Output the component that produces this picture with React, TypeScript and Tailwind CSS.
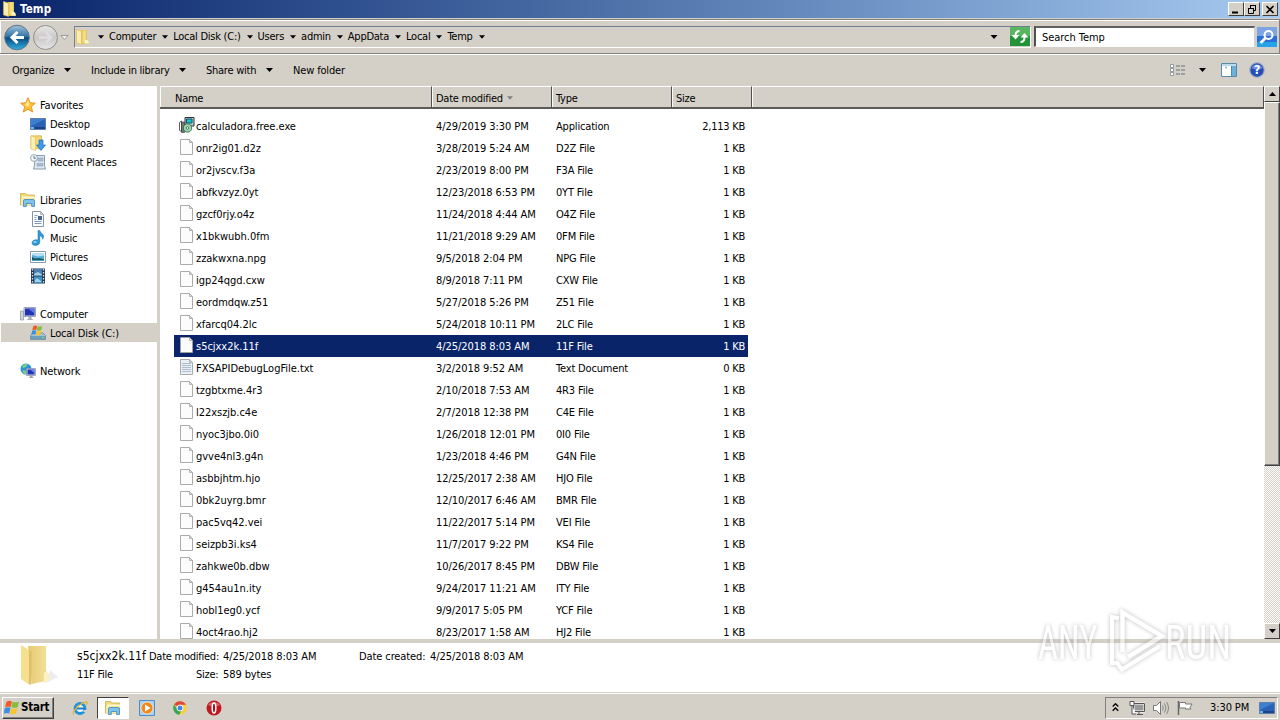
import type { ReactNode } from 'react'

type FileRow = [name: string, date: string, type: string, size: string]

const FILES: FileRow[] = [
  ['calculadora.free.exe', '4/29/2019 3:30 PM', 'Application', '2,113 KB'],
  ['onr2ig01.d2z', '3/28/2019 5:24 AM', 'D2Z File', '1 KB'],
  ['or2jvscv.f3a', '2/23/2019 8:00 PM', 'F3A File', '1 KB'],
  ['abfkvzyz.0yt', '12/23/2018 6:53 PM', '0YT File', '1 KB'],
  ['gzcf0rjy.o4z', '11/24/2018 4:44 AM', 'O4Z File', '1 KB'],
  ['x1bkwubh.0fm', '11/21/2018 9:29 AM', '0FM File', '1 KB'],
  ['zzakwxna.npg', '9/5/2018 2:04 PM', 'NPG File', '1 KB'],
  ['igp24qgd.cxw', '8/9/2018 7:11 PM', 'CXW File', '1 KB'],
  ['eordmdqw.z51', '5/27/2018 5:26 PM', 'Z51 File', '1 KB'],
  ['xfarcq04.2lc', '5/24/2018 10:11 PM', '2LC File', '1 KB'],
  ['s5cjxx2k.11f', '4/25/2018 8:03 AM', '11F File', '1 KB'],
  ['FXSAPIDebugLogFile.txt', '3/2/2018 9:52 AM', 'Text Document', '0 KB'],
  ['tzgbtxme.4r3', '2/10/2018 7:53 AM', '4R3 File', '1 KB'],
  ['l22xszjb.c4e', '2/7/2018 12:38 PM', 'C4E File', '1 KB'],
  ['nyoc3jbo.0i0', '1/26/2018 12:01 PM', '0I0 File', '1 KB'],
  ['gvve4nl3.g4n', '1/23/2018 4:46 PM', 'G4N File', '1 KB'],
  ['asbbjhtm.hjo', '12/25/2017 2:38 AM', 'HJO File', '1 KB'],
  ['0bk2uyrg.bmr', '12/10/2017 6:46 AM', 'BMR File', '1 KB'],
  ['pac5vq42.vei', '11/22/2017 5:14 PM', 'VEI File', '1 KB'],
  ['seizpb3i.ks4', '11/7/2017 9:22 PM', 'KS4 File', '1 KB'],
  ['zahkwe0b.dbw', '10/26/2017 8:45 PM', 'DBW File', '1 KB'],
  ['g454au1n.ity', '9/24/2017 11:21 AM', 'ITY File', '1 KB'],
  ['hobl1eg0.ycf', '9/9/2017 5:05 PM', 'YCF File', '1 KB'],
  ['4oct4rao.hj2', '8/23/2017 1:58 AM', 'HJ2 File', '1 KB'],
]

const SELECTED = 's5cjxx2k.11f'

const CRUMBS = ['Computer', 'Local Disk (C:)', 'Users', 'admin', 'AppData', 'Local', 'Temp']

function Svg({ children, size = 16 }: { children: ReactNode; size?: number }) {
  return (
    <svg width={size} height={size} viewBox="0 0 16 16" className="shrink-0">
      {children}
    </svg>
  )
}

function Caret({ className = '' }: { className?: string }) {
  return (
    <svg width="7" height="4" viewBox="0 0 7 4" className={`shrink-0 ${className}`}>
      <path d="M0 0h7L3.5 4z" fill="currentColor" />
    </svg>
  )
}

/* ---------- icons ---------- */

function FolderIcon() {
  return (
    <Svg>
      <path d="M6 1h6v10.500l2 3.500H6z" fill="#e3c358" />
      <path d="M7.500 1.500H11v12H7.500z" fill="#f2db84" />
      <path d="M1.500.500 6.500 2v13.500L1.500 14z" fill="#fbedae" stroke="#d8b64c" strokeWidth=".6" />
      <path d="M9.500 11.500c2-1.500 4-.5 4.500 3H9.500z" fill="#fff6c4" />
    </Svg>
  )
}

function StarIcon() {
  return (
    <Svg>
      <path d="m8 .700 2.100 5 5.200.500-3.900 3.500 1.200 5.300L8 12.300 3.400 15l1.200-5.300L.700 6.200l5.200-.500z" fill="#fdc23c" stroke="#e98a1c" strokeWidth=".9" />
      <path d="M8 3 9.300 6.600 8 10 5 8z" fill="#ffe89a" />
    </Svg>
  )
}

function DesktopIcon() {
  return (
    <Svg>
      <path d="M.500 2.500h15v11H.500z" fill="#2a62b8" stroke="#5c7fae" />
      <path d="M1 3h14L1 10z" fill="#3f7fd0" />
      <path d="M1 11h14v2H1z" fill="#1c4484" />
      <path d="M1 11h3v2H1z" fill="#6fb6e8" />
    </Svg>
  )
}

function DownloadsIcon() {
  return (
    <Svg>
      <path d="M1 .800h10.500v13H1z" fill="#f1d675" stroke="#cfac47" strokeWidth=".7" />
      <path d="M1 1 5.500 2v13.500L1 14z" fill="#fcefb4" stroke="#d8b64c" strokeWidth=".5" />
      <path d="M9 5h4v5h2.500L11 15.500 6.500 10H9z" fill="#3f9bea" stroke="#1d6bb8" strokeWidth=".7" />
    </Svg>
  )
}

function RecentIcon() {
  return (
    <Svg>
      <path d="M5 1.500h9.500v10l1 3.500H3.500l1-4z" fill="#dde6ee" stroke="#7f94a8" strokeWidth=".9" />
      <path d="M8 4h5v3H8zM7 9.500h6V12H7z" fill="#a9bfd3" stroke="#8197ad" strokeWidth=".5" />
      <circle cx="4" cy="4" r="3.400" fill="#f4f8fb" stroke="#8294a5" strokeWidth=".8" />
      <path d="M4 2v2.300h2" fill="none" stroke="#44586c" strokeWidth=".8" />
    </Svg>
  )
}

function LibrariesIcon() {
  return (
    <Svg>
      <path d="M.500 3V1.500h5L7 3h7.500v10h-14z" fill="#f2d979" stroke="#cfac47" strokeWidth=".8" />
      <path d="M2 4.500h13v3H2z" fill="#fff7d0" />
      <path d="M1 6h14v7H1z" fill="#f9e9a3" />
      <path d="M3.500 14.500V9q0-1.500 1.500-1.500h8q1.500 0 1.500 1.500v5.500h-2.800v-3H6.300v3z" fill="#7cc4ec" stroke="#3c87bd" strokeWidth=".8" />
    </Svg>
  )
}

function DocumentIcon() {
  return (
    <Svg>
      <path d="M2.500.500h8l3 3v12h-11z" fill="#fbfdff" stroke="#8593a3" />
      <path d="M4.500 4.500h3m-3 2h2m-2 2h2m-2 2h7m-7 2h7" stroke="#7590b2" strokeWidth=".9" />
      <path d="M8 5h4v4H8z" fill="#41668f" />
      <path d="M10.500.500v3h3z" fill="#d4dde7" stroke="#8593a3" strokeWidth=".6" />
    </Svg>
  )
}

function MusicIcon() {
  return (
    <Svg>
      <path d="M8 .500h1.800c.3 2.500 4 3.200 3.800 6.300-.1 1.200-.7 2-1.100 2.500.3-2-1-3.200-2.700-3.500V12c0 2-1.800 3.500-4.300 3.500S2 14.300 2 12.700 3.800 9.800 6 9.800c.8 0 1.500.1 2 .3z" fill="#2e9adb" stroke="#1a6dab" strokeWidth=".5" />
      <ellipse cx="5" cy="12" rx="1.800" ry="1" fill="#91d0f3" />
    </Svg>
  )
}

function PicturesIcon() {
  return (
    <Svg>
      <path d="M.500 2.500h15v11H.500z" fill="#fff" stroke="#8d99a6" />
      <path d="M2 4h12v8H2z" fill="#59aede" />
      <path d="M2 4h12v2.500L8 7.500 2 6z" fill="#b5e1f6" />
      <path d="m2 8 3 1.500L9 9l5 1v2H2z" fill="#175b63" />
      <path d="M2 11h12v1H2z" fill="#48a5bd" />
    </Svg>
  )
}

function VideosIcon() {
  return (
    <Svg>
      <path d="M1 .500h14v15H1z" fill="#27374f" />
      <path d="M4 1h8v6.500H4z" fill="#4a7fb5" />
      <path d="M4 8.500h8V15H4z" fill="#3d93c6" />
      <path d="m4 6 4-2 4 2.500v1H4zM5 12l2-2 4 3v1H5z" fill="#a3d0e4" />
      <path d="M2.500 1v14M13.500 1v14" stroke="#dde7f2" strokeWidth="1.300" strokeDasharray="1.500 1.500" />
    </Svg>
  )
}

function ComputerIcon() {
  return (
    <Svg>
      <path d="M.500 5h3v9h-3z" fill="#cfd4da" stroke="#8d949c" strokeWidth=".7" />
      <path d="M4 1.500h11.500v9H4z" fill="#d5d9e2" stroke="#8c93a5" strokeWidth=".8" />
      <path d="M5 2.500h9.500v7H5z" fill="#2033b5" />
      <path d="M8 2.500h6.500v5z" fill="#6078e6" />
      <path d="M8.500 11h3v1.500l2 1.500h-7l2-1.500z" fill="#a7aeb8" />
    </Svg>
  )
}

function Flag() {
  return (
    <>
      <path d="M2.500 1.800C4.500.500 6 .700 8 1.500L6.700 7C4.900 6.200 3 6.300 1 7.300z" fill="#ee5b26" />
      <path d="M8.700 1.800c2 .8 4.300.8 6.300-.3l-1.300 5.500c-2 1.100-4.300 1.100-6.300.3z" fill="#84bd3b" />
      <path d="M.800 8.200c2-1 3.900-1.100 5.700-.3l-1.300 5.600c-2-.8-3.700-.7-5.700.3z" fill="#3a8fe0" />
      <path d="M7.200 8.200c2 .8 4.300.8 6.300-.3l-1.300 5.500c-2 1.100-4.300 1.100-6.300.3z" fill="#fbc32b" />
    </>
  )
}

function DiskIcon() {
  return (
    <Svg>
      <path d="M.500 10.500 3 8h10l2.500 2.500v4H.500z" fill="#a9c2d2" stroke="#6b8a9e" strokeWidth=".8" />
      <path d="M1 11h14v3H1z" fill="#6b9fbb" />
      <path d="M12 12h2v1h-2z" fill="#7cea6e" />
      <g transform="translate(1.500 0) scale(.72)">
        <Flag />
      </g>
    </Svg>
  )
}

function NetworkIcon() {
  return (
    <Svg>
      <circle cx="6" cy="6" r="5.500" fill="#2c93d6" />
      <path d="M2 3c2-2 5-2.500 6-2L6 4 3 5zM3 7l4 1-1 3.300C3 11 2 9 3 7z" fill="#74d17d" />
      <path d="M6.500 5.500h9v7h-9z" fill="#d5d9e2" stroke="#878ea0" strokeWidth=".7" />
      <path d="M7.500 6.500h7v5h-7z" fill="#1f35bf" />
      <path d="M10 6.500h4.500v3.500z" fill="#6d84e8" />
      <path d="M10 13h2.500v1l1.500 1H8.500l1.500-1z" fill="#9aa2ad" />
    </Svg>
  )
}

function PageIcon({ lined = false }: { lined?: boolean }) {
  return (
    <Svg>
      <path d="M1.500.500h9l3 3v12h-12z" fill={lined ? '#e9eff4' : '#fcfcfc'} stroke="#a2a2a2" strokeWidth=".9" />
      <path d="M10.500.500v3h3z" fill="#e2e2e2" stroke="#a2a2a2" strokeWidth=".7" />
      {lined && <path d="M3 4.500h9m-9 2h9m-9 2h9m-9 2h9m-9 2h9" stroke="#9db2c2" strokeWidth=".8" />}
    </Svg>
  )
}

function InstallerIcon() {
  return (
    <Svg>
      <path d="M6 .500h9v8.500H6z" fill="#c3c7ca" stroke="#30373c" />
      <path d="M7.500 2h5.500v4H7.500z" fill="#17c3c9" stroke="#0a5a70" />
      <path d="M.500 5.500 2.500 4v10.500l-2-1z" fill="#fff" stroke="#333" strokeWidth=".8" />
      <path d="M2.500 5h3v10.500h-3z" fill="#70767a" stroke="#333" strokeWidth=".6" />
      <circle cx="8.500" cy="11" r="4.200" fill="#9ad8ac" stroke="#2d5c42" strokeWidth=".8" />
      <circle cx="8.500" cy="11" r="1.300" fill="#fff" stroke="#2d5c42" strokeWidth=".8" />
    </Svg>
  )
}

/* ---------- window chrome ---------- */

function CaptionButton({ children, className = '' }: { children: ReactNode; className?: string }) {
  return (
    <button className={`flex h-[14px] w-[16px] items-center justify-center border border-t-white border-r-[#404040] border-b-[#404040] border-l-white bg-[#d4d0c8] ${className}`}>
      <svg width="12" height="11" viewBox="0 0 12 11" fill="none" stroke="#000">
        {children}
      </svg>
    </button>
  )
}

function TitleBar() {
  return (
    <div className="flex h-[18px] shrink-0 items-center bg-linear-to-r from-[#0a246a] to-[#a6caf0] pr-[2px] pl-[2px]">
      <FolderIcon />
      <span className="ml-[2px] flex-1 pt-[2px] text-[11.500px] font-bold tracking-[0.1px] text-white">Temp</span>
      <CaptionButton>
        <path d="M2 8.500h6" strokeWidth="2" />
      </CaptionButton>
      <CaptionButton>
        <path d="M4 1.500h6M4.500 1v3M9.500 1v5.500H8M2 4.500h6M2.500 4v5.500h5V4" />
      </CaptionButton>
      <CaptionButton className="ml-[2px]">
        <path d="m2.500 2 7 7m0-7-7 7" strokeWidth="1.600" />
      </CaptionButton>
    </div>
  )
}

function NavButtons() {
  return (
    <svg width="70" height="28" viewBox="0 0 70 28" className="shrink-0">
      <defs>
        <linearGradient id="back" x1="0" y1="0" x2="0" y2="1">
          <stop offset="0" stopColor="#a5c3d8" />
          <stop offset=".45" stopColor="#2f76a8" />
          <stop offset=".52" stopColor="#0b4a80" />
          <stop offset="1" stopColor="#2fb2e2" />
        </linearGradient>
        <linearGradient id="fwd" x1="0" y1="0" x2="0" y2="1">
          <stop offset="0" stopColor="#e8e8e8" />
          <stop offset=".5" stopColor="#c9c8c6" />
          <stop offset="1" stopColor="#e6e6e6" />
        </linearGradient>
      </defs>
      <circle cx="17" cy="14.500" r="12.300" fill="url(#back)" stroke="#5f7386" />
      <path d="M24 14.500H11.500m6-5.500L12 14.500l5.500 5.500" fill="none" stroke="#fff" strokeWidth="3" />
      <circle cx="45.500" cy="14.500" r="12" fill="url(#fwd)" stroke="#8e8e8e" />
      <path d="M39 14.500h12m-5-5 5 5-5 5" fill="none" stroke="#dedede" strokeWidth="2.500" />
      <path d="M61 12.500h7l-3.500 4z" fill="#f4f4f4" stroke="#888" strokeWidth=".8" />
    </svg>
  )
}

function AddressBar() {
  return (
    <div className="mt-px flex h-[35px] shrink-0 items-center border-t border-r border-b border-t-[#808080] border-r-[#808080] border-b-[#808080] shadow-[inset_1px_1px_0_#fff,0_1px_0_#fff]">
      <NavButtons />
      <div className="ml-[4px] flex h-[22px] w-[957px] items-center border border-t-[#6f7f8f] border-r-white border-b-white border-l-[#808080] text-[11px]">
        <FolderIcon />
        <div className="flex flex-1 items-center pl-px tracking-[-0.25px]">
          {CRUMBS.map((crumb) => (
            <span key={crumb} className="flex items-center">
              <Caret className="mr-[5px] ml-[6px] w-[6px]" />
              {crumb}
            </span>
          ))}
          <Caret className="ml-[6px] w-[6px]" />
        </div>
        <Caret className="mr-[12px] w-[8px]" />
        <svg width="20" height="19" viewBox="0 0 20 19">
          <path d="M0 0h20v19H0z" fill="#239339" />
          <path d="M0 0h20v9H0z" fill="#57b65f" />
          <path d="M9.500 4C7 4 5.500 5.500 5.500 9M10.500 15c3 0 4-1.500 4-5" fill="none" stroke="#fff" strokeWidth="2" />
          <path d="M1.500 8h8l-4 4.500zM10.500 10.500h8l-4-4.500z" fill="#fff" />
        </svg>
      </div>
      <div className="ml-[3px] flex h-[21px] w-[221px] items-center border border-t-2 border-l-2 border-t-[#606060] border-r-[#d4d0c8] border-b-white border-l-[#505050] bg-white pl-[6px] text-[11px] tracking-[-0.05px]">
        Search Temp
      </div>
      <svg width="20" height="20" viewBox="0 0 20 20" className="ml-[2px]">
        <path d="M0 0h20v20H0z" fill="#2a6ddb" />
        <path d="M0 0h20v9H0z" fill="#7ea4e6" />
        <path d="M0 15h20v5H0z" fill="#25a3e8" />
        <circle cx="11.500" cy="8" r="4" fill="none" stroke="#fff" strokeWidth="2" />
        <path d="m8.500 11-5 5" stroke="#fff" strokeWidth="2.600" />
      </svg>
    </div>
  )
}

function CommandBar() {
  return (
    <div className="flex h-[32px] shrink-0 items-center pl-[12px] text-[11px]">
      <div className="flex w-[79px] items-center justify-between pr-[20px] whitespace-nowrap">
        Organize
        <Caret />
      </div>
      <div className="flex w-[115px] items-center justify-between pr-[20px] whitespace-nowrap">
        Include in library
        <Caret />
      </div>
      <div className="flex w-[87px] items-center justify-between pr-[20px] whitespace-nowrap">
        Share with
        <Caret />
      </div>
      <span className="flex-1 tracking-[-0.15px]">New folder</span>
      <svg width="16" height="12" viewBox="0 0 16 12" className="mr-[13px]">
        <path d="M.500.500h3v3h-3zM.500 4.500h3v3h-3zM.500 8.500h3v3h-3z" fill="#fff" stroke="#7d8896" strokeWidth=".8" />
        <path d="M6 2h4m1 0h4M6 6h4m1 0h4m-9 4h4m1 0h4" stroke="#64707e" strokeWidth="1" />
      </svg>
      <Caret className="mr-[15px]" />
      <svg width="16" height="14" viewBox="0 0 16 14" className="mr-[12px]">
        <path d="M.500.500h15v13H.500z" fill="#fff" stroke="#5789a8" />
        <path d="M1 1h14v2H1z" fill="#bbdcee" />
        <path d="M11 3h4v10h-4z" fill="#6bb2da" />
        <path d="M10.500 3v10M5 3.500v2" stroke="#5789a8" />
      </svg>
      <svg width="16" height="16" viewBox="0 0 16 16" className="mr-[15px]">
        <circle cx="8" cy="8" r="7.300" fill="#2450b4" stroke="#a8b1c8" strokeWidth="1.200" />
        <path d="M2.500 6A6 6 0 0 1 13.500 6q-5 3-11 0" fill="#6d8edb" />
        <text x="8" y="12.300" textAnchor="middle" fill="#fff" className="text-[12px] font-bold">?</text>
      </svg>
    </div>
  )
}

/* ---------- sidebar ---------- */

function NavItem({ icon, label, root, active }: { icon: ReactNode; label: string; root?: boolean; active?: boolean }) {
  const indent = root ? 'pl-[20px]' : active ? 'ml-px bg-[#d4d0c8] pl-[29px]' : 'pl-[30px]'

  return (
    <div className={`flex h-[19px] shrink-0 items-center gap-[4px] ${indent}`}>
      {icon}
      <span className="pt-[2px]">{label}</span>
    </div>
  )
}

function Sidebar() {
  return (
    <nav className="flex w-[157px] shrink-0 flex-col bg-white pt-[9px] text-[11px] tracking-[-0.15px]">
      <NavItem root icon={<StarIcon />} label="Favorites" />
      <NavItem icon={<DesktopIcon />} label="Desktop" />
      <NavItem icon={<DownloadsIcon />} label="Downloads" />
      <NavItem icon={<RecentIcon />} label="Recent Places" />
      <div className="h-[19px]" />
      <NavItem root icon={<LibrariesIcon />} label="Libraries" />
      <NavItem icon={<DocumentIcon />} label="Documents" />
      <NavItem icon={<MusicIcon />} label="Music" />
      <NavItem icon={<PicturesIcon />} label="Pictures" />
      <NavItem icon={<VideosIcon />} label="Videos" />
      <div className="h-[19px]" />
      <NavItem root icon={<ComputerIcon />} label="Computer" />
      <NavItem active icon={<DiskIcon />} label="Local Disk (C:)" />
      <div className="h-[19px]" />
      <NavItem root icon={<NetworkIcon />} label="Network" />
    </nav>
  )
}

/* ---------- file list ---------- */

function HeaderCell({ children, className }: { children?: ReactNode; className: string }) {
  return (
    <div className={`flex h-full items-center border-t border-r border-l border-t-white border-r-[#505050] border-l-white pt-[2px] ${className}`}>
      {children}
    </div>
  )
}

function FileList() {
  return (
    <div className="flex min-w-0 flex-1 flex-col overflow-hidden bg-white text-[11px]">
      <div className="flex h-[23px] shrink-0 border-b-2 border-[#5c5a56] bg-[#d4d0c8]">
        <HeaderCell className="w-[272px] pl-[14px]">Name</HeaderCell>
        <HeaderCell className="w-[120px] pl-[3px]">
          Date modified
          <Caret className="ml-[4px] w-[6px] text-[#808080]" />
        </HeaderCell>
        <HeaderCell className="w-[120px] pl-[3px]">Type</HeaderCell>
        <HeaderCell className="w-[80px] pl-[3px]">Size</HeaderCell>
        <HeaderCell className="flex-1" />
      </div>
      <div className="pt-[6px] pl-[14px]">
        {FILES.map(([name, date, type, size]) => (
          <div key={name} className={`flex h-[22px] w-[574px] items-center ${name === SELECTED ? 'bg-[#0a246a] text-white' : ''}`}>
            <div className="flex w-[262px] items-center gap-px pl-[5px] tracking-[-0.03px]">
              <span className="pb-[2px]">
                {name.endsWith('.exe') ? <InstallerIcon /> : <PageIcon lined={name.endsWith('.txt')} />}
              </span>
              {name}
            </div>
            <div className="w-[120px] tracking-[-0.06px]">{date}</div>
            <div className="w-[118px] tracking-[-0.17px]">{type}</div>
            <div className="flex-1 pr-[3px] text-right">{size}</div>
          </div>
        ))}
      </div>
    </div>
  )
}

function ScrollButton({ down = false }: { down?: boolean }) {
  return (
    <div className="flex h-[16px] shrink-0 items-center justify-center border border-t-white border-r-[#404040] border-b-[#404040] border-l-white bg-[#d4d0c8]">
      <Caret className={down ? '' : 'rotate-180'} />
    </div>
  )
}

function Scrollbar() {
  return (
    <div className="flex w-[16px] shrink-0 flex-col bg-[#eae8e4] bg-[repeating-conic-gradient(#d4d0c8_0_25%,#fff_0_50%)] bg-size-[2px_2px]">
      <ScrollButton />
      <div className="h-[364px] border border-t-white border-r-[#404040] border-b-[#404040] border-l-white bg-[#d4d0c8] shadow-[inset_-1px_-1px_0_#808080]" />
      <div className="flex-1" />
      <ScrollButton down />
    </div>
  )
}

/* ---------- details pane and taskbar ---------- */

function DetailsPane() {
  return (
    <div className="flex h-[49px] shrink-0 bg-white text-[11px]">
      <svg width="42" height="44" viewBox="0 0 42 44" className="ml-[18px] shrink-0">
        <defs>
          <linearGradient id="big" x1="0" x2="1">
            <stop offset="0" stopColor="#e6ca72" />
            <stop offset="1" stopColor="#f4e3a0" />
          </linearGradient>
        </defs>
        <path d="m28 40 12-6-8-7z" fill="#ededed" />
        <path d="M10 3h18v24l4 10-18 4z" fill="url(#big)" />
        <path d="M26 30c3-3 5 0 6 7l-6 3z" fill="#fbf2c3" />
        <path d="M3 2 11 7v34.500L3 36z" fill="#f5e08f" />
        <path d="m11 7 2.500 1v33.500H11z" fill="#dfc068" />
      </svg>
      <div className="ml-[16px] flex flex-col pt-[4px]">
        <div className="flex h-[18px] items-center whitespace-nowrap">
          <span className="w-[73px] pl-px text-[12px] tracking-[0.050px]">s5cjxx2k.11f</span>
          <span className="w-[74px]">Date modified:</span>
          <span className="w-[136px] tracking-[-0.06px]">4/25/2018 8:03 AM</span>
          <span className="w-[71px] tracking-[-0.1px]">Date created:</span>
          <span className="tracking-[-0.06px]">4/25/2018 8:03 AM</span>
        </div>
        <div className="flex h-[18px] items-center whitespace-nowrap">
          <span className="w-[120px] pl-px">11F File</span>
          <span className="w-[27px]">Size:</span>
          <span className="tracking-[-0.1px]">589 bytes</span>
        </div>
      </div>
    </div>
  )
}

function Watermark() {
  return (
    <svg width="210" height="80" viewBox="0 0 210 80" className="absolute top-[600px] left-[1030px] overflow-visible opacity-55 drop-shadow-[0_0_2px_#888]">
      <g fill="#fff" className="text-[49px] tracking-normal" style={{ fontFamily: 'Roboto, sans-serif' }}>
        <text transform="translate(8 59) scale(.71 1)">ANY</text>
        <text transform="translate(135 59) scale(.79 1)">RUN</text>
      </g>
      <path d="M92.500 52V12.500L132 36 98 57" fill="none" stroke="#fff" strokeWidth="4.500" />
      <path d="M89 18.500 82 17v46h5l5 6.500L130 46" fill="none" stroke="#fff" strokeWidth="4" />
    </svg>
  )
}

function Taskbar() {
  return (
    <div className="flex h-[28px] shrink-0 items-center border-t border-[#d4d0c8] pt-[2px] pl-[2px] text-[11px] shadow-[inset_0_1px_0_#fff]">
      <button className="flex h-[22px] w-[52px] items-center gap-px border border-t-white border-r-[#404040] border-b-[#404040] border-l-white pl-px text-[11.500px] font-bold shadow-[inset_-1px_-1px_0_#808080]">
        <Svg>
          <Flag />
        </Svg>
        Start
      </button>
      <div className="ml-[18px] flex items-center">
        <Svg>
          <circle cx="8" cy="8.500" r="5" fill="#eef8ff" stroke="#2291dc" strokeWidth="2.800" />
          <path d="M4 8.500h9" stroke="#1d7cc8" strokeWidth="2" />
          <path d="M11.500 10h4v2h-4z" fill="#d4d0c8" />
          <path d="M1.500 14.500C-.500 12 9 2 14.500 1.800c1.500.2.500 2.200-.500 3.200" fill="none" stroke="#e5b52e" strokeWidth="1.200" />
        </Svg>
        <div className="ml-[9px] flex h-[22px] w-[32px] items-center justify-center border border-t-[#404040] border-r-white border-b-white border-l-[#404040] bg-white">
          <LibrariesIcon />
        </div>
        <div className="ml-[10px]">
          <Svg>
            <path d="M.500.500h15v15H.500z" fill="#a9d1f1" stroke="#4d8cc4" />
            <circle cx="8" cy="8" r="6" fill="#f08a1c" stroke="#fff" strokeWidth=".6" />
            <path d="M6 4.500 11.500 8 6 11.500z" fill="#fff" />
          </Svg>
        </div>
        <div className="ml-[17px]">
          <Svg>
            <circle cx="8" cy="8" r="6.800" fill="#fcd03a" />
            <path d="M8 8 2.100 4.600A6.800 6.800 0 0 1 14 4.800H8z" fill="#e0443a" />
            <path d="M2.100 4.600A6.800 6.800 0 0 0 7.300 14.800L10 9.500 5.500 9.500z" fill="#39a556" />
            <circle cx="8" cy="8" r="3" fill="#4286f5" stroke="#fff" strokeWidth=".9" />
          </Svg>
        </div>
        <div className="ml-[18px]">
          <Svg>
            <circle cx="8" cy="8" r="7.500" fill="#c01820" />
            <path d="M2 5a7 6 0 0 1 12 0q-6 3-12 0" fill="#dd6268" />
            <ellipse cx="8" cy="8" rx="1.800" ry="5" fill="#a01018" stroke="#fff" strokeWidth="1.500" />
          </Svg>
        </div>
      </div>
      <div className="mr-[2px] ml-auto flex h-[22px] w-[173px] items-center border border-t-[#808080] border-r-white border-b-white border-l-[#808080] pl-[6px]">
        <svg width="7" height="9" viewBox="0 0 7 9" fill="none" stroke="#000" strokeWidth="1.300">
          <path d="m.700 3.500 2.800-2.800 2.800 2.800M.700 7.800 3.500 5l2.800 2.800" />
        </svg>
        <div className="ml-[10px]">
          <Svg>
            <path d="M4.500 3.500h11v8h-11z" fill="#999" stroke="#fff" strokeWidth="2" />
            <path d="M4.500 3.500h11v8h-11zM8 14.500h6M10 12v2" fill="none" stroke="#555" />
            <path d="M1 1.500h4v4H1zM3 5.500V14h4" fill="#fff" stroke="#555" />
          </Svg>
        </div>
        <div className="ml-[8px]">
          <Svg>
            <path d="M.500 5.500h3l4-4v13l-4-4h-3z" fill="#fff" stroke="#777" />
            <path d="M9.500 5.500q1.500 2.500 0 5M11.500 3.500q3 4.500 0 9M13.500 2q4 6 0 12" fill="none" stroke="#888" />
          </Svg>
        </div>
        <div className="ml-[8px]">
          <Svg>
            <path d="M1.500 1v14" stroke="#666" strokeWidth="1.500" />
            <path d="M2.500 2.500h6v1.500H15l-2 3.500 1 1.500H8.500v-1h-6z" fill="#fff" stroke="#777" />
          </Svg>
        </div>
        <span className="ml-[17px] flex-1 tracking-[-0.100px]">3:30 PM</span>
        <DesktopIcon />
        <div className="w-[2px]" />
      </div>
    </div>
  )
}

export default function App() {
  return (
    <div className="relative flex h-[720px] w-[1280px] flex-col overflow-hidden bg-[#d4d0c8] font-['DejaVu_Sans_Condensed','DejaVu_Sans',sans-serif] leading-none tracking-[-0.25px] text-black [font-stretch:condensed]">
      <TitleBar />
      <AddressBar />
      <CommandBar />
      <div className="flex h-[553px] shrink-0">
        <Sidebar />
        <div className="w-[3px] bg-[#d4d0c8]" />
        <FileList />
        <Scrollbar />
      </div>
      <div className="h-[4px] shrink-0 bg-[#d4d0c8]" />
      <DetailsPane />
      <Taskbar />
      <Watermark />
    </div>
  )
}
